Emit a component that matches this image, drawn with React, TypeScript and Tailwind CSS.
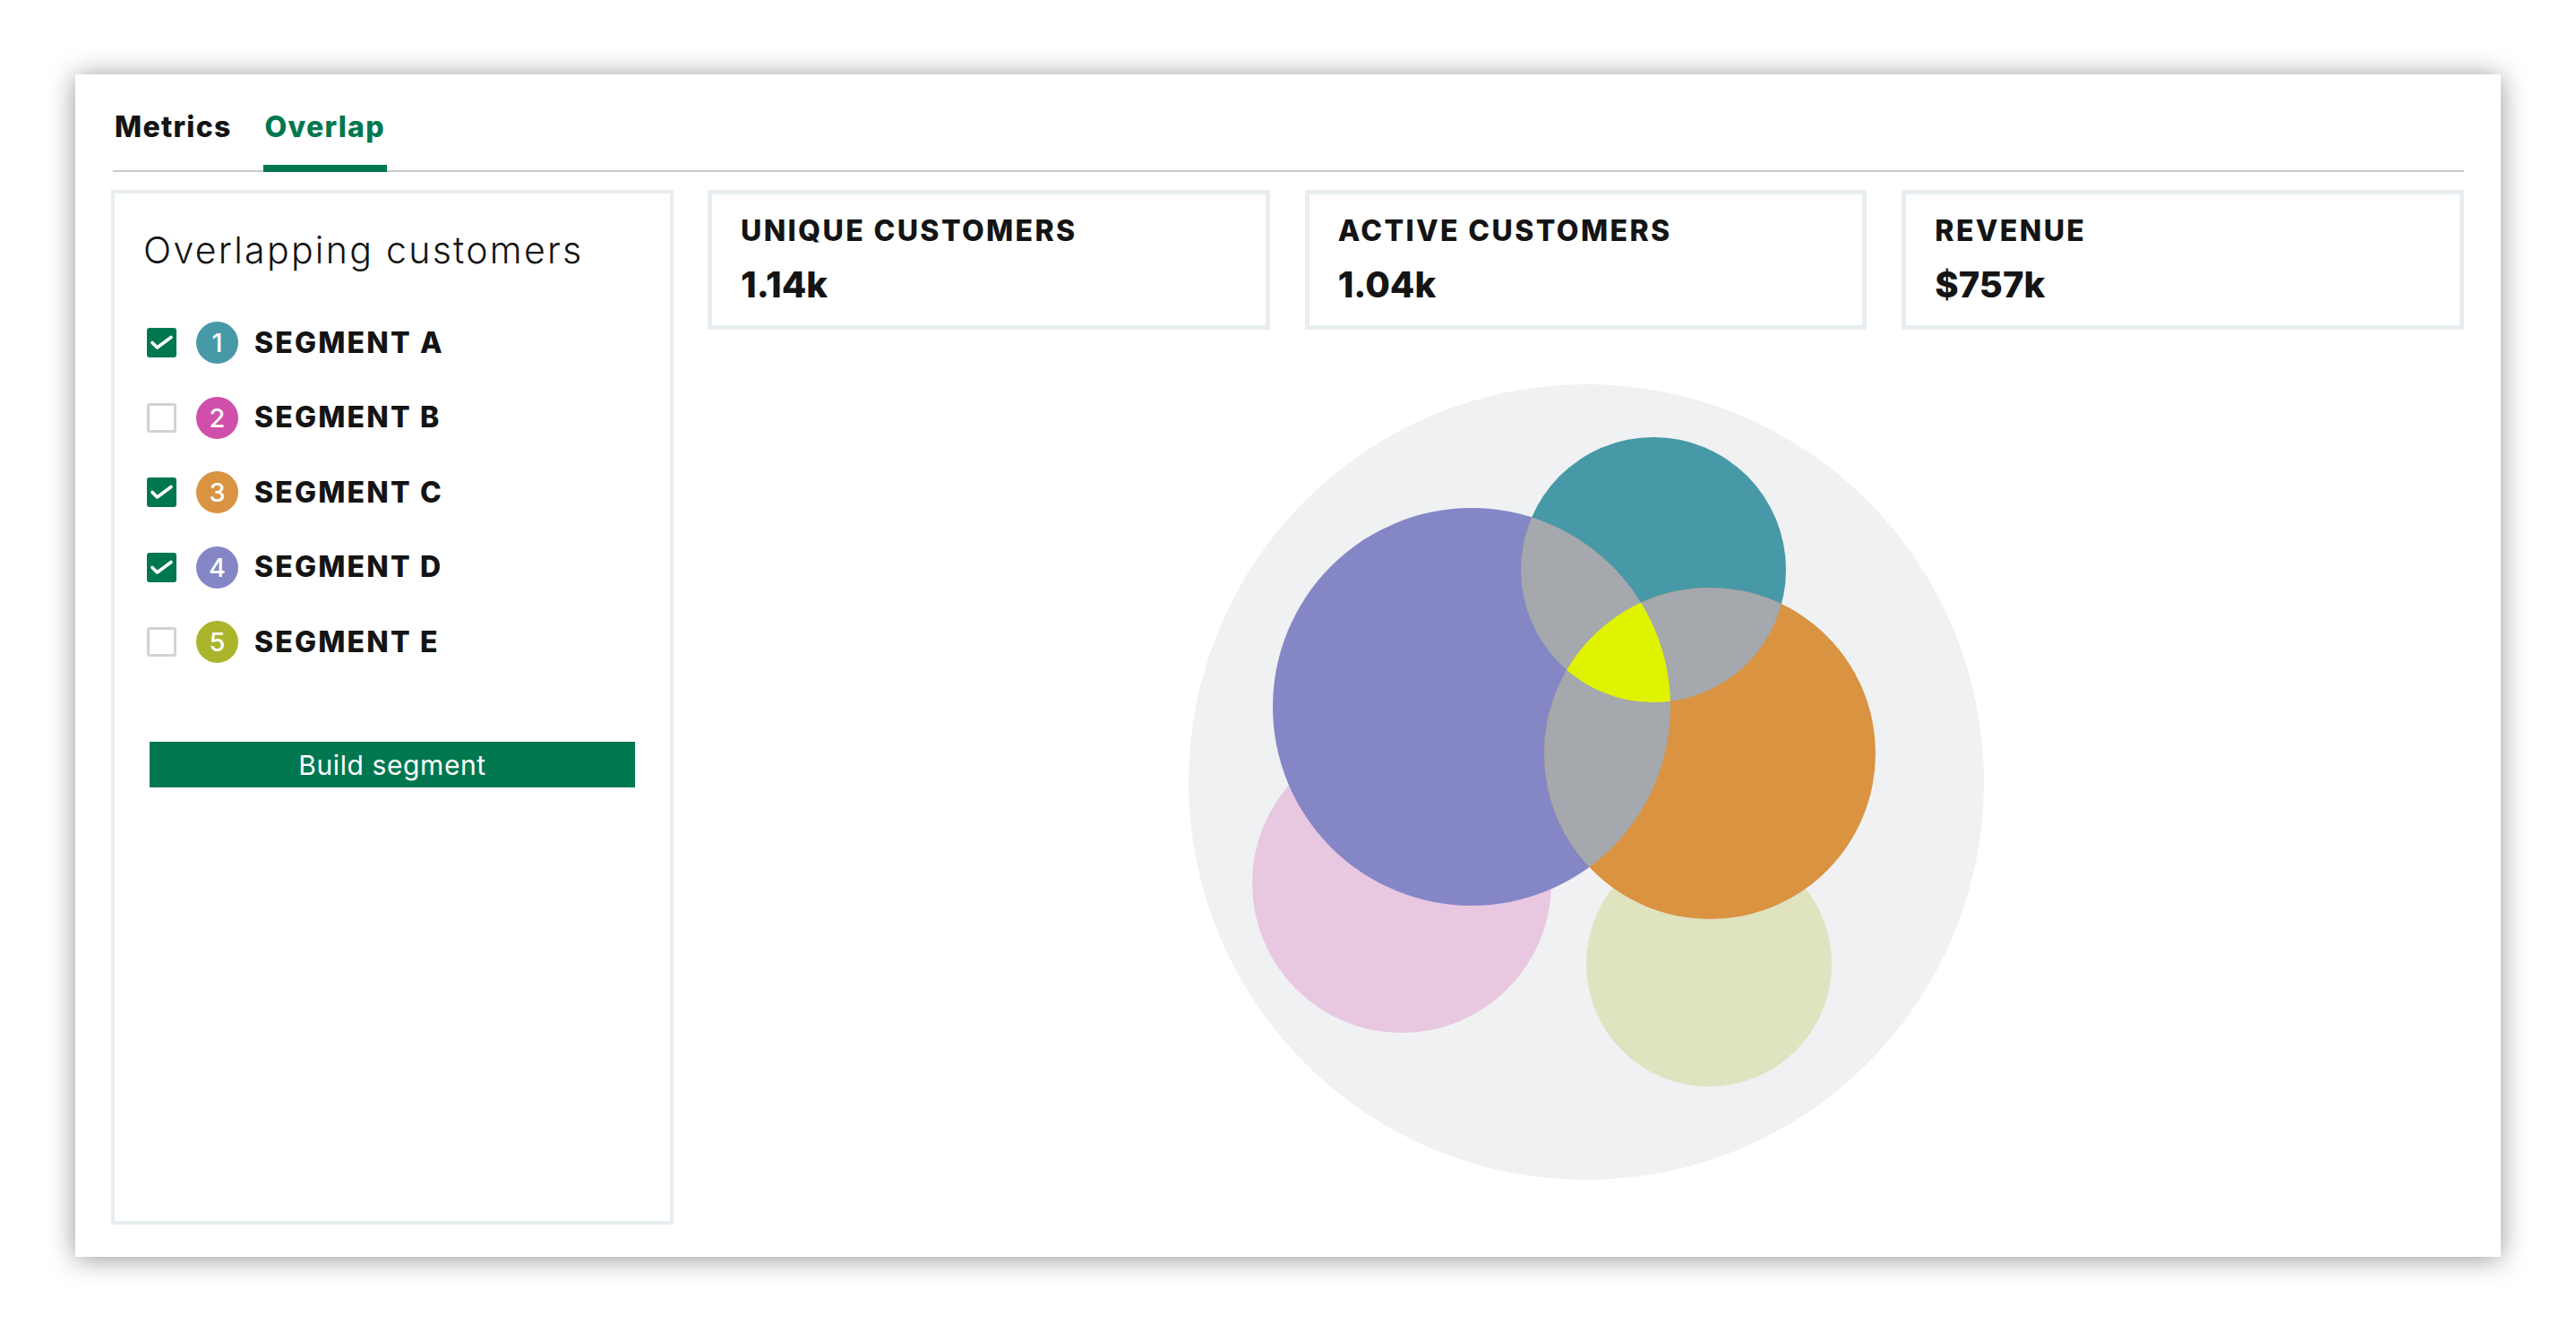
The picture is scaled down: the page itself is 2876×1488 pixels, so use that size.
import React from "react";

type Seg = { n: number; label: string; color: string; checked: boolean };

const segments: Seg[] = [
  { n: 1, label: "SEGMENT A", color: "bg-[#4799a7]", checked: true },
  { n: 2, label: "SEGMENT B", color: "bg-[#d04faa]", checked: false },
  { n: 3, label: "SEGMENT C", color: "bg-[#d99341]", checked: true },
  { n: 4, label: "SEGMENT D", color: "bg-[#8586c6]", checked: true },
  { n: 5, label: "SEGMENT E", color: "bg-[#abb52b]", checked: false },
];

function CheckBox({ checked }: { checked: boolean }) {
  if (checked) {
    return (
      <div className="w-[33px] h-[33px] rounded-[3px] bg-[#00774f] flex items-center justify-center shrink-0">
        <svg width="33" height="33" viewBox="0 0 33 33">
          <path
            d="M6 16.5 L11.5 22 L27 10.5"
            fill="none"
            stroke="white"
            strokeWidth="3.6"
            strokeLinecap="round"
            strokeLinejoin="round"
          />
        </svg>
      </div>
    );
  }
  return <div className="w-[33px] h-[33px] rounded-[3px] border-[3px] border-[#d2d2d2] bg-white shrink-0" />;
}

function SegmentRow({ s }: { s: Seg }) {
  return (
    <div className="flex items-center h-[47px]">
      <CheckBox checked={s.checked} />
      <div
        className={`ml-[22px] w-[47px] h-[47px] rounded-full ${s.color} flex items-center justify-center text-white text-[29px] leading-none font-medium shrink-0`}
      >
        {s.n}
      </div>
      <div className="ml-[18px] text-[32px] leading-none font-extrabold tracking-[0.068em] text-[#141414]">{s.label}</div>
    </div>
  );
}

function StatCard({ label, value }: { label: string; value: string }) {
  return (
    <div className="h-[156px] border-[5px] border-[#e7edf0] pl-[32px] pt-[25px]">
      <div className="text-[32px] leading-none font-extrabold tracking-[0.075em] text-[#141414]">{label}</div>
      <div className="mt-[24px] text-[40px] leading-none font-extrabold text-[#141414]">{value}</div>
    </div>
  );
}

function Venn() {
  const D = { cx: 317, cy: 361, r: 222 };
  const A = { cx: 520, cy: 208, r: 148 };
  const C = { cx: 583, cy: 413, r: 185 };
  return (
    <svg width="890" height="890" viewBox="0 0 890 890">
      <defs>
        <clipPath id="clipD">
          <circle cx={D.cx} cy={D.cy} r={D.r} />
        </clipPath>
        <clipPath id="clipA">
          <circle cx={A.cx} cy={A.cy} r={A.r} />
        </clipPath>
      </defs>
      <circle cx="445" cy="445" r="444" fill="#f0f1f3" />
      <circle cx="239" cy="558" r="167" fill="#e8c8e0" />
      <circle cx="582" cy="648" r="137" fill="#dfe3c0" />
      <circle cx={D.cx} cy={D.cy} r={D.r} fill="#8586c6" />
      <circle cx={A.cx} cy={A.cy} r={A.r} fill="#4799a7" />
      <circle cx={C.cx} cy={C.cy} r={C.r} fill="#d99341" />
      <g clipPath="url(#clipD)">
        <circle cx={A.cx} cy={A.cy} r={A.r} fill="#a5a8ac" />
        <circle cx={C.cx} cy={C.cy} r={C.r} fill="#a5a8ac" />
      </g>
      <g clipPath="url(#clipA)">
        <circle cx={C.cx} cy={C.cy} r={C.r} fill="#a5a8ac" />
      </g>
      <g clipPath="url(#clipD)">
        <g clipPath="url(#clipA)">
          <circle cx={C.cx} cy={C.cy} r={C.r} fill="#dff200" />
        </g>
      </g>
    </svg>
  );
}

export default function App() {
  return (
    <div className="w-[2876px] h-[1488px] bg-white pt-[83px] pl-[84px] font-[Inter] text-[#141414]">
      <div className="w-[2708px] h-[1320px] bg-white shadow-[0_2px_28px_rgba(0,0,0,0.42)] pt-[43px] pl-[40px] pr-[41px]">
        {/* Tabs */}
        <div className="ml-[2px] flex gap-[33px] border-b-2 border-[#c9c9c9]">
          <div className="px-[2px] pb-[26px] border-b-[8px] border-transparent -mb-[2px] text-[32px] leading-none font-extrabold tracking-[0.04em] text-[#141414]">
            Metrics
          </div>
          <div className="px-[2px] pb-[26px] border-b-[8px] border-[#00774f] -mb-[2px] text-[32px] leading-none font-extrabold tracking-[0.04em] text-[#00774f]">
            Overlap
          </div>
        </div>

        {/* Body */}
        <div className="mt-[20px] flex gap-[38px]">
          {/* Left panel */}
          <div className="w-[628px] h-[1155px] border-[4px] border-[#e7edf0] shrink-0">
            <div className="pl-[32px] pt-[43px] text-[41px] leading-none font-light tracking-[0.056em] text-[#141414]">
              Overlapping customers
            </div>
            <div className="mt-[59px] pl-[36px] flex flex-col gap-[36.5px]">
              {segments.map((s) => (
                <SegmentRow key={s.n} s={s} />
              ))}
            </div>
            <div className="mt-[88px] mx-[39px] h-[51px] bg-[#00774f] flex items-center justify-center text-white text-[30px] leading-none font-normal tracking-[0.02em]">
              Build segment
            </div>
          </div>

          {/* Right side */}
          <div className="flex-1 flex flex-col">
            <div className="grid grid-cols-3 gap-[39px]">
              <StatCard label="UNIQUE CUSTOMERS" value="1.14k" />
              <StatCard label="ACTIVE CUSTOMERS" value="1.04k" />
              <StatCard label="REVENUE" value="$757k" />
            </div>
            <div className="mt-[60px] flex justify-center">
              <Venn />
            </div>
          </div>
        </div>
      </div>
    </div>
  );
}
